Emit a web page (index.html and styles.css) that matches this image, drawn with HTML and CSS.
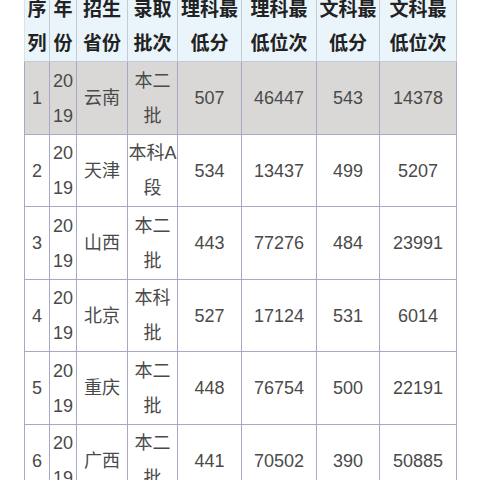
FILE: index.html
```html
<!DOCTYPE html>
<html lang="zh">
<head>
<meta charset="utf-8">
<link rel="stylesheet" href="styles.css">
</head>
<body>
<div class="page">
<table class="score">
<colgroup>
<col class="c1"><col class="c2"><col class="c3"><col class="c4"><col class="c5"><col class="c6"><col class="c7"><col class="c8">
</colgroup>
<thead>
<tr><th>序列</th><th>年份</th><th>招生省份</th><th>录取批次</th><th>理科最低分</th><th>理科最低位次</th><th>文科最低分</th><th>文科最低位次</th></tr>
</thead>
<tbody>
<tr class="hl"><td>1</td><td>2019</td><td>云南</td><td>本二批</td><td>507</td><td>46447</td><td>543</td><td>14378</td></tr>
<tr><td>2</td><td>2019</td><td>天津</td><td>本科A段</td><td>534</td><td>13437</td><td>499</td><td>5207</td></tr>
<tr><td>3</td><td>2019</td><td>山西</td><td>本二批</td><td>443</td><td>77276</td><td>484</td><td>23991</td></tr>
<tr><td>4</td><td>2019</td><td>北京</td><td>本科批</td><td>527</td><td>17124</td><td>531</td><td>6014</td></tr>
<tr><td>5</td><td>2019</td><td>重庆</td><td>本二批</td><td>448</td><td>76754</td><td>500</td><td>22191</td></tr>
<tr><td>6</td><td>2019</td><td>广西</td><td>本二批</td><td>441</td><td>70502</td><td>390</td><td>50885</td></tr>
</tbody>
</table>
</div>
</body>
</html>
```
FILE: styles.css
```css
html, body {
  margin: 0;
  padding: 0;
  background: #ffffff;
  overflow: hidden;
}
.page {
  padding-left: 24px;
  width: 432px;
}
.score {
  margin-top: -11px;
  border-collapse: collapse;
  table-layout: fixed;
  width: 432px;
  font-family: "Liberation Sans", "Noto Sans CJK SC", sans-serif;
  text-align: center;
}
.c1 { width: 25px; }
.c2 { width: 27px; }
.c3 { width: 51px; }
.c4 { width: 50px; }
.c5 { width: 64px; }
.c6 { width: 75px; }
.c7 { width: 63px; }
.c8 { width: 77px; }
.score th {
  background: #e9f4fb;
  color: #222222;
  font-family: "Noto Sans CJK SC", sans-serif;
  font-size: 19px;
  font-weight: 700;
  line-height: 34px;
  padding: 2px 1px;
  border: 1px solid #c3cad4;
  border-top: none;
  word-break: break-all;
  vertical-align: middle;
}
.score td {
  color: #4a4a4a;
  font-size: 18px;
  line-height: 35px;
  padding: 1.5px 0 0;
  border: 1px solid #aaa6c6;
  word-break: break-all;
  vertical-align: middle;
}
.score tr.hl td {
  background: #d9d8d6;
}
.score thead th:first-child { border-left: 1px solid #d6e2ec; }
```
